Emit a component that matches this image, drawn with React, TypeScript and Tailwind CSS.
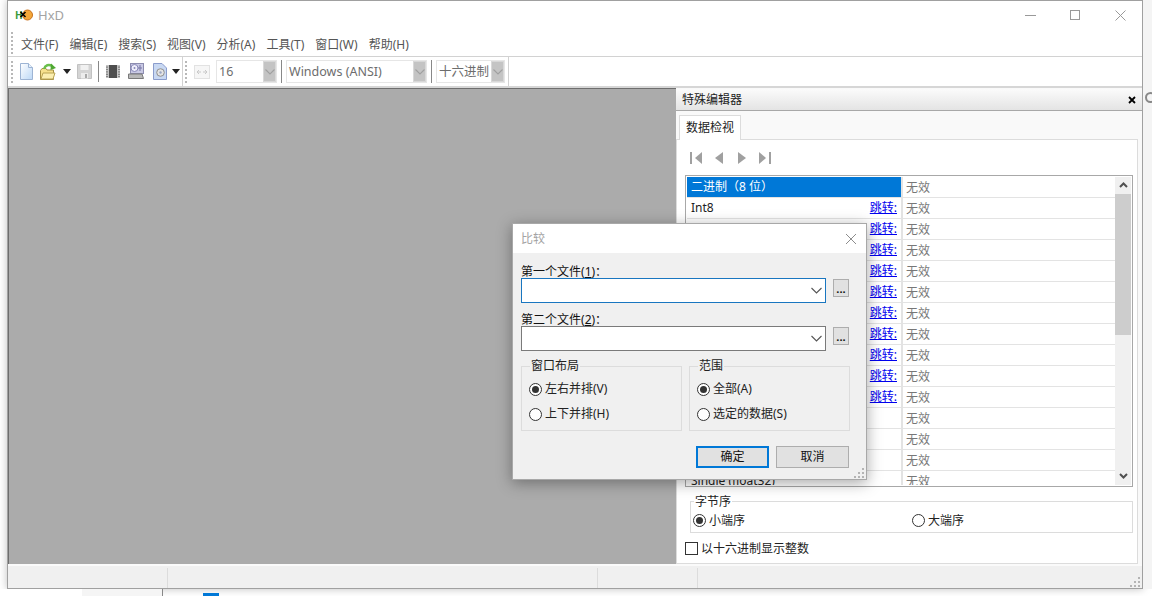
const menus = ["文件(F)", "编辑(E)", "搜索(S)", "视图(V)", "分析(A)", "工具(T)", "窗口(W)", "帮助(H)"]

const rows = [
  { name: "二进制（8 位）", jump: false },
  { name: "Int8", jump: true },
  { name: "UInt8", jump: true },
  { name: "Int16", jump: true },
  { name: "UInt16", jump: true },
  { name: "Int24", jump: true },
  { name: "UInt24", jump: true },
  { name: "Int32", jump: true },
  { name: "UInt32", jump: true },
  { name: "Int64", jump: true },
  { name: "UInt64", jump: true },
  { name: "AnsiChar", jump: false },
  { name: "WideChar", jump: false },
  { name: "UTF-8", jump: false },
  { name: "Single (float32)", jump: false },
]

function Gripper({ rows = 6 }: { rows?: number }) {
  return (
    <div className="flex flex-col gap-[2px]">
      {Array.from({ length: rows }).map((_, i) => (
        <div key={i} className="w-[2px] h-[2px] bg-[#b8b8b8]" />
      ))}
    </div>
  )
}

function ResizeGrip() {
  return (
    <svg width="10" height="10" viewBox="0 0 10 10" className="block">
      <g fill="#b4b4b4">
        <rect x="8" y="0" width="2" height="2" />
        <rect x="4" y="4" width="2" height="2" />
        <rect x="8" y="4" width="2" height="2" />
        <rect x="0" y="8" width="2" height="2" />
        <rect x="4" y="8" width="2" height="2" />
        <rect x="8" y="8" width="2" height="2" />
      </g>
    </svg>
  )
}

function ToolCombo({ text, width }: { text: string; width: string }) {
  return (
    <div className={`flex h-[23px] items-stretch border border-[#e6e6e6] bg-white ${width}`}>
      <div className="flex-1 pl-[2px] leading-[21px] text-[12.5px] text-[#6d6d6d] whitespace-nowrap overflow-hidden">{text}</div>
      <div className="flex w-[13px] items-center justify-center bg-[#c4c4c4] border border-[#d8d8d8]">
        <svg width="10" height="6" viewBox="0 0 10 6">
          <path d="M0.5 0.5 L5 5 L9.5 0.5" fill="none" stroke="#a0a0a0" strokeWidth="1.1" />
        </svg>
      </div>
    </div>
  )
}

function DropArrow() {
  return (
    <svg width="8" height="5" viewBox="0 0 8 5" className="block">
      <path d="M0 0 H8 L4 5 Z" fill="#222" />
    </svg>
  )
}

function Radio({ checked = false }: { checked?: boolean }) {
  return (
    <div className="flex h-[13px] w-[13px] shrink-0 items-center justify-center rounded-full border border-[#333] bg-white">
      {checked && <div className="h-[7px] w-[7px] rounded-full bg-[#333]" />}
    </div>
  )
}

function Group({ title, items }: { title: string; items: string[] }) {
  return (
    <fieldset className="h-[72px] w-[161px] border border-[#dcdcdc] pl-[7px]">
      <legend className="ml-[1px] px-[1px] text-[12px] leading-[14px] text-[#222]">{title}</legend>
      <div className="mt-[8px] flex items-center gap-[3px] h-[16px] leading-[16px]">
        <Radio checked />
        <span>{items[0]}</span>
      </div>
      <div className="mt-[9px] flex items-center gap-[3px] h-[16px] leading-[16px]">
        <Radio />
        <span>{items[1]}</span>
      </div>
    </fieldset>
  )
}

function FileRow({ label, num, focused }: { label: string; num: string; focused?: boolean }) {
  return (
    <div>
      <div className="h-[15px] leading-[17px] text-[12px] text-[#111]">
        {label}(<span className="underline">{num}</span>)：
      </div>
      <div className="flex items-start gap-[7px]">
        <div className={`flex h-[25px] w-[305px] items-center justify-end border bg-white pr-[3px] ${focused ? "border-[#1976c0]" : "border-[#7a7a7a]"}`}>
          <svg width="11" height="7" viewBox="0 0 11 7">
            <path d="M0.5 1 L5.5 6 L10.5 1" fill="none" stroke="#555" strokeWidth="1.1" />
          </svg>
        </div>
        <div className="mt-[1px] flex h-[18px] w-[16px] items-end justify-center border border-[#adadad] bg-[#e1e1e1] pb-[4px] text-[11px] font-bold leading-[6px] text-[#111]">
          ...
        </div>
      </div>
    </div>
  )
}

function CompareDialog() {
  return (
    <div className="absolute left-[512px] top-[223px] flex h-[257px] w-[355px] flex-col border border-[#a8a8a8] bg-[#f0f0f0] shadow-[0_3px_14px_rgba(0,0,0,0.35)]">
      <div className="flex h-[29px] items-center justify-between bg-white pl-[8px] pr-[9px]">
        <span className="mt-[1px] text-[12px] text-[#a3a3a3]">比较</span>
        <svg width="12" height="12" viewBox="0 0 12 12">
          <path d="M1 1 L11 11 M11 1 L1 11" stroke="#8c8c8c" strokeWidth="1" />
        </svg>
      </div>
      <div className="relative flex-1 px-[8px] pt-[10px]">
        <FileRow label="第一个文件" num="1" focused />
        <div className="mt-[8px]">
          <FileRow label="第二个文件" num="2" />
        </div>
        <div className="mt-[8px] flex gap-[7px] text-[12px] text-[#222]">
          <Group title="窗口布局" items={["左右并排(V)", "上下并排(H)"]} />
          <Group title="范围" items={["全部(A)", "选定的数据(S)"]} />
        </div>
        <div className="mt-[15px] flex justify-end gap-[7px] pr-[9px]">
          <div className="flex h-[22px] w-[73px] items-center justify-center border-2 border-[#0078d7] bg-[#e1e1e1] text-[12px] text-[#111]">确定</div>
          <div className="flex h-[22px] w-[73px] items-center justify-center border border-[#adadad] bg-[#e1e1e1] text-[12px] text-[#111]">取消</div>
        </div>
        <div className="absolute bottom-[1px] right-[2px]">
          <ResizeGrip />
        </div>
      </div>
    </div>
  )
}

function NavIcon({ dir, bar }: { dir: "l" | "r"; bar?: boolean }) {
  return (
    <svg width="14" height="14" viewBox="0 0 14 14" className="block">
      {dir === "l" ? <path d={bar ? "M13 1 V13 L6 7 Z" : "M11 1 V13 L3 7 Z"} fill="#a0a0a0" /> : <path d={bar ? "M1 1 V13 L8 7 Z" : "M3 1 V13 L11 7 Z"} fill="#a0a0a0" />}
      {bar && <rect x={dir === "l" ? 1 : 11} y="1" width="2" height="12" fill="#a0a0a0" />}
    </svg>
  )
}

function DataTable() {
  return (
    <div className="mt-[10px] ml-[8px] flex h-[312px] w-[448px] border border-[#a8a8a8] bg-white p-[1px]">
      <div className="h-full w-[428px] overflow-hidden text-[12px]">
        {rows.map((r, i) => (
          <div key={r.name} className="flex h-[21px] border-b border-[#e3e3e3]">
            <div className={`flex w-[216px] items-center justify-between pl-[4px] pr-[4px] border-r-2 border-[#e3e3e3] ${i === 0 ? "bg-[#0078d7] text-white" : "text-[#222]"}`}>
              <span className="whitespace-nowrap">{r.name}</span>
              {r.jump && <span className="text-[#0000ee] underline">跳转:</span>}
            </div>
            <div className="pl-[3px] leading-[21px] text-[#777]">无效</div>
          </div>
        ))}
      </div>
      <div className="flex w-[16px] flex-col bg-[#f0f0f0]">
        <div className="flex h-[17px] items-center justify-center">
          <svg width="9" height="6" viewBox="0 0 9 6">
            <path d="M1 5 L4.5 1.5 L8 5" fill="none" stroke="#505050" strokeWidth="2" />
          </svg>
        </div>
        <div className="h-[141px] bg-[#cdcdcd]" />
        <div className="flex-1" />
        <div className="flex h-[17px] items-center justify-center">
          <svg width="9" height="6" viewBox="0 0 9 6">
            <path d="M1 1 L4.5 4.5 L8 1" fill="none" stroke="#505050" strokeWidth="2" />
          </svg>
        </div>
      </div>
    </div>
  )
}

function SidePanel() {
  return (
    <div className="flex w-[466px] flex-col bg-[#f9f9f9]">
      <div className="mt-[1px] flex h-[22px] items-center justify-between border-b border-[#a8a8a8] bg-gradient-to-b from-[#fbfbfb] to-[#e4e4e4] pl-[6px] pr-[6px] pt-[1px]">
        <span className="text-[12px] text-[#222]">特殊编辑器</span>
        <svg width="8" height="8" viewBox="0 0 8 8">
          <path d="M1 1 L7 7 M7 1 L1 7" stroke="#000" strokeWidth="1.8" />
        </svg>
      </div>
      <div className="mt-[4px] flex h-[25px] pl-[3px]">
        <div className="relative z-10 flex h-[25px] w-[62px] items-center justify-center border border-b-0 border-[#dcdcdc] bg-white text-[12px] text-[#222]">数据检视</div>
      </div>
      <div className="-mt-[1px] flex h-[427px] w-[462px] flex-col border border-[#dcdcdc] bg-white">
        <div className="ml-[12px] mt-[11px] flex items-center gap-[9px]">
          <NavIcon dir="l" bar />
          <NavIcon dir="l" />
          <NavIcon dir="r" />
          <NavIcon dir="r" bar />
        </div>
        <DataTable />
        <fieldset className="ml-[13px] mt-[8px] h-[38px] w-[443px] border border-[#dcdcdc] pl-[2px] text-[12px] text-[#222]">
          <legend className="ml-[1px] px-[1px] leading-[14px]">字节序</legend>
          <div className="mt-[2px] flex h-[20px] items-center">
            <Radio checked />
            <span className="ml-[3px] w-[190px]">小端序</span>
            <div className="ml-[13px]" />
            <Radio />
            <span className="ml-[3px]">大端序</span>
          </div>
        </fieldset>
        <div className="ml-[8px] mt-[7px] flex items-center gap-[3px] text-[12px] text-[#222]">
          <div className="h-[13px] w-[13px] border border-[#333] bg-white" />
          <span>以十六进制显示整数</span>
        </div>
      </div>
    </div>
  )
}

function ToolIcons() {
  return (
    <>
      {/* new file */}
      <svg width="15" height="17" viewBox="0 0 15 17" className="ml-[6px]">
        <defs>
          <linearGradient id="pg" x1="0" y1="0" x2="1" y2="1">
            <stop offset="0" stopColor="#ffffff" />
            <stop offset="1" stopColor="#bcd8f6" />
          </linearGradient>
        </defs>
        <path d="M1.5 0.5 H9.5 L13.5 4.5 V16.5 H1.5 Z" fill="url(#pg)" stroke="#9db4d4" />
        <path d="M9.5 0.5 V4.5 H13.5" fill="#e8f1fb" stroke="#9db4d4" />
      </svg>
      {/* open */}
      <svg width="17" height="18" viewBox="0 0 17 18" className="ml-[6px]">
        <path d="M0.5 7.5 L2 5.5 H6 L7 7 H13.5 V16.5 H0.5 Z" fill="#f6e08c" stroke="#a58f44" />
        <path d="M1 16 L3 10 H15 L13 16 Z" fill="#fbeeb0" stroke="#b9a455" />
        <path d="M4 6 C5 2 9 1 12 3" fill="none" stroke="#6abf4b" strokeWidth="2.4" />
        <path d="M11 0.5 L16 5 L10.5 7 Z" fill="#4fa832" />
      </svg>
      <div className="ml-[6px]"><DropArrow /></div>
      {/* save, disabled */}
      <svg width="15" height="15" viewBox="0 0 15 15" className="ml-[6px]">
        <path d="M0.5 0.5 H14.5 V14.5 H0.5 Z" fill="#d4d4d4" stroke="#c2c2c2" />
        <rect x="3.5" y="1" width="8" height="5" fill="#f1f1f1" />
        <rect x="4" y="9" width="7" height="5.5" fill="#ececec" />
        <rect x="8" y="10" width="2" height="4" fill="#a8a8a8" />
      </svg>
      <div className="ml-[6px] h-[21px] w-[1px] bg-[#888]" />
      {/* chip */}
      <svg width="14" height="15" viewBox="0 0 14 15" className="ml-[7px]">
        <rect x="0" y="1" width="14" height="13" fill="#c4c4c4" />
        <rect x="3" y="1" width="8" height="13" fill="#4e4e4e" />
        <path d="M1 2.5 V13 M13 2.5 V13" stroke="#6c6c6c" strokeWidth="1.4" strokeDasharray="1.2 1.2" />
      </svg>
      {/* disk */}
      <svg width="16" height="17" viewBox="0 0 16 17" className="ml-[8px]">
        <rect x="2.5" y="0.5" width="13" height="10" fill="#c9c9e4" stroke="#8d8db0" />
        <circle cx="6.5" cy="5" r="3.5" fill="#eeeefb" stroke="#8888b8" />
        <circle cx="6.5" cy="5" r="1" fill="#8888b8" />
        <path d="M12 2 V8 M10 5 H14" stroke="#7777a5" />
        <path d="M0.5 11 H14 L15.5 15.5 H0.5 Z" fill="#b8b8b8" stroke="#7a7a7a" />
      </svg>
      {/* disk image */}
      <svg width="14" height="17" viewBox="0 0 14 17" className="ml-[9px]">
        <path d="M0.5 0.5 H9 L13.5 5 V16.5 H0.5 Z" fill="#c8d8f2" stroke="#8a9ccc" />
        <circle cx="7.5" cy="9.5" r="3.8" fill="#e4e4e4" stroke="#8f8f8f" />
        <circle cx="7.5" cy="9.5" r="1.2" fill="#9aa6c4" />
      </svg>
      <div className="ml-[5px]"><DropArrow /></div>
    </>
  )
}

export default function App() {
  return (
    <div className="relative flex h-[596px] w-[1152px] flex-col overflow-hidden bg-white font-['Noto_Sans','Noto_Sans_CJK_SC',sans-serif] text-[12px]">
      <div className="flex h-[589px] shrink-0">
        <div className="ml-[7px] flex h-[589px] w-[1138px] flex-col border border-[#a0a0a0] bg-white shadow-[0_0_8px_rgba(0,0,0,0.25)]">
          {/* title bar */}
          <div className="flex h-[29px] items-center pl-[7px]">
            <svg width="18" height="14" viewBox="0 0 18 14" className="block">
              <text x="0" y="11" fontSize="10" fontWeight="bold" fill="#3b9a3b">H</text>
              <circle cx="12.5" cy="7" r="5" fill="#f4a83a" stroke="#c8701a" />
              <path d="M5.5 4 L10.5 9 M10.5 4 L5.5 9" stroke="#000" strokeWidth="1.6" />
            </svg>
            <span className="ml-[5px] text-[13px] text-[#a3a3a3]">HxD</span>
            <div className="ml-auto flex items-center">
              <div className="h-[1px] w-[11px] bg-[#999]" />
              <div className="ml-[34px] h-[10px] w-[10px] border border-[#999]" />
              <svg width="11" height="11" viewBox="0 0 11 11" className="ml-[35px] mr-[16px]">
                <path d="M0.5 0.5 L10.5 10.5 M10.5 0.5 L0.5 10.5" stroke="#999" strokeWidth="1" />
              </svg>
            </div>
          </div>
          {/* menu */}
          <div className="flex h-[28px] items-center border-b border-[#d2d2d2] pl-[3px]">
            <Gripper />
            <div className="ml-[8px] mt-[3px] flex gap-[11px] text-[12px] text-[#555]">
              {menus.map((m) => (
                <span key={m}>{m}</span>
              ))}
            </div>
          </div>
          {/* toolbar */}
          <div className="flex h-[29px] items-center">
            <div className="flex h-full w-[175px] items-center border-r border-[#d2d2d2] pl-[3px]">
              <Gripper />
              <ToolIcons />
            </div>
            <div className="ml-[2px] flex h-full items-center">
              <Gripper />
            </div>
            <svg width="16" height="16" viewBox="0 0 16 16" className="ml-[7px]">
              <rect x="0.5" y="1.5" width="15" height="13" fill="#f6f6f6" stroke="#e2e2e2" />
              <path d="M3 8 H7 M9 8 H13 M3 8 L5 6 M3 8 L5 10 M13 8 L11 6 M13 8 L11 10" stroke="#c8c8c8" fill="none" />
            </svg>
            <div className="ml-[6px]"><ToolCombo text="16" width="w-[61px]" /></div>
            <div className="ml-[4px] h-[23px] w-[1px] bg-[#888]" />
            <div className="ml-[4px]"><ToolCombo text="Windows (ANSI)" width="w-[141px]" /></div>
            <div className="ml-[4px] h-[23px] w-[1px] bg-[#888]" />
            <div className="ml-[4px]"><ToolCombo text="十六进制" width="w-[69px]" /></div>
            <div className="ml-[3px] h-full w-[1px] bg-[#d2d2d2]" />
          </div>
          {/* work area */}
          <div className="flex h-[478px] border-t-2 border-[#d6d6d6]">
            <div className="w-[668px] border-l border-t border-[#6e6e6e] bg-[#ababab]" />
            <SidePanel />
          </div>
          {/* status bar */}
          <div className="relative flex flex-1 border-t-2 border-[#fafafa] bg-[#f0f0f0] pt-[2px]">
            <div className="h-[20px] w-[160px] border-r border-[#dcdcdc]" />
            <div className="h-[20px] w-[430px] border-r border-[#dcdcdc]" />
            <div className="h-[20px] w-[100px] border-r border-[#dcdcdc]" />
            <div className="absolute bottom-[1px] right-[2px]">
              <ResizeGrip />
            </div>
          </div>
        </div>
        <div className="flex-1 bg-[#f4f4f4]">
          <div className="mt-[92px] ml-[2px] h-[11px] w-[11px] rounded-full border-2 border-[#888]" />
        </div>
      </div>
      {/* what shows below the window */}
      <div className="flex flex-1">
        <div className="h-full w-[82px] bg-white" />
        <div className="h-full w-[81px] border-r border-[#888] bg-[#f5f5f5]" />
        <div className="ml-[40px] mt-[4px] h-[4px] w-[16px] bg-[#0078d7]" />
      </div>
      <CompareDialog />
    </div>
  )
}
